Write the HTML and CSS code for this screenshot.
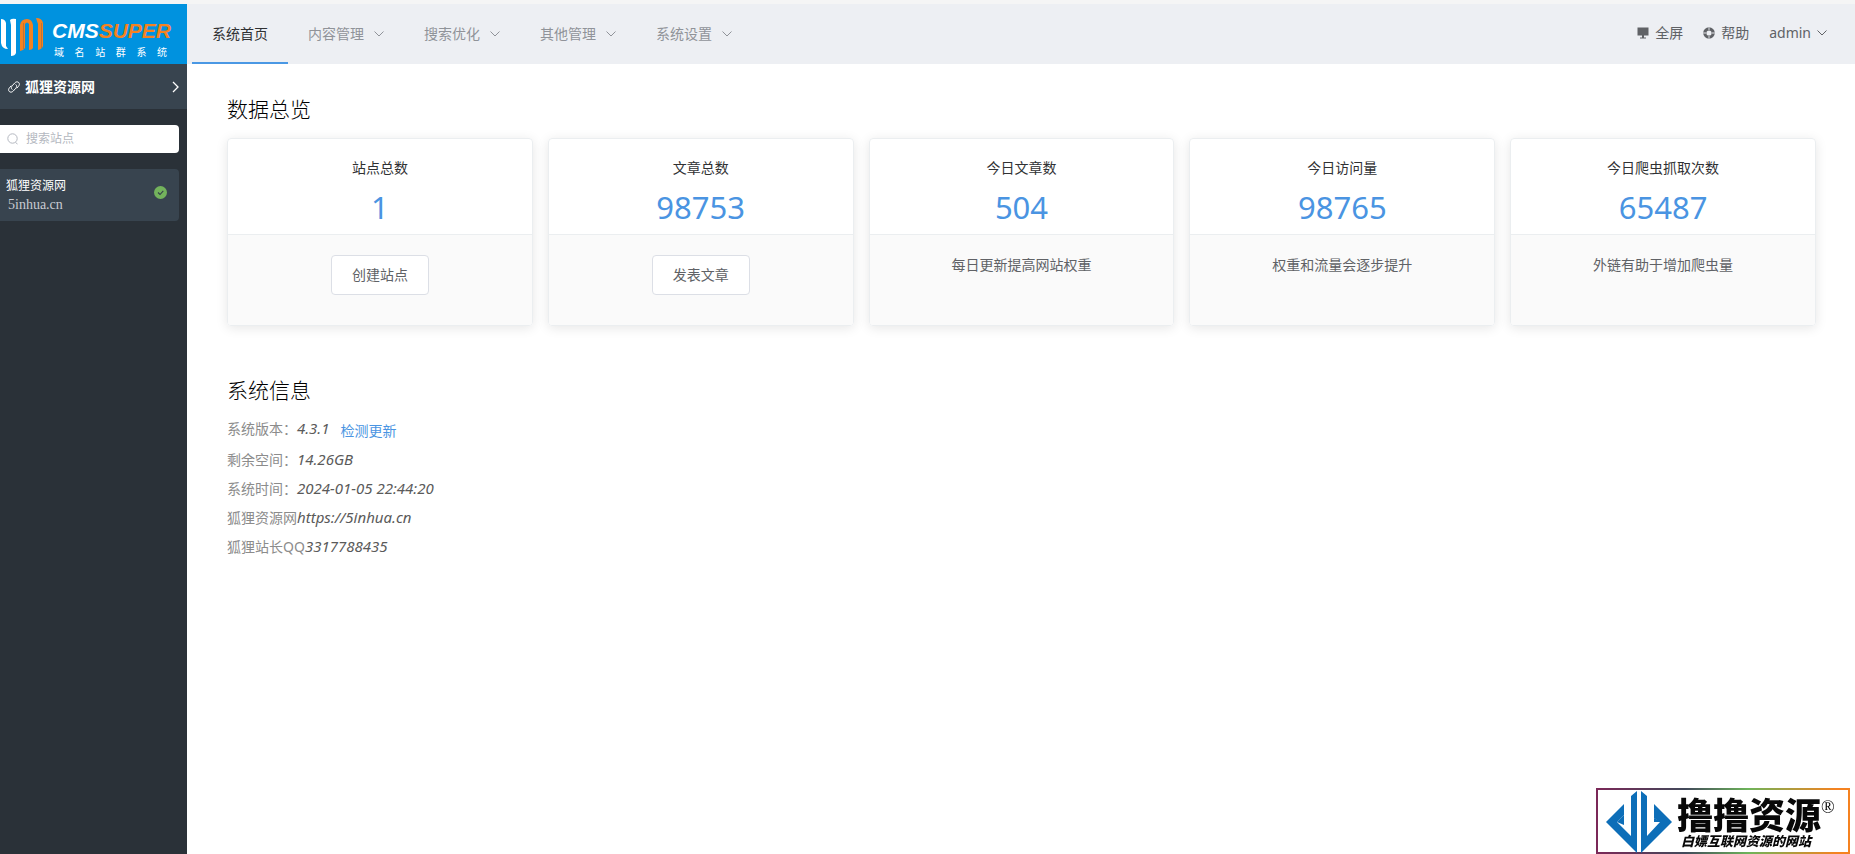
FILE: index.html
```html
<!DOCTYPE html>
<html lang="zh-CN">
<head>
<meta charset="utf-8">
<title>CMSSUPER</title>
<link rel="stylesheet" href="styles.css">
</head>
<body>
<div class="app">
  <aside class="sidebar">
    <div class="logo">
      <svg class="logo-mark" width="44" height="40" viewBox="0 0 44 40" aria-hidden="true">
        <path fill="#fff" d="M1 2q4 0 5 4v23l2 3q-6 0-7-6zM10 3q2-2 6-1v34q-1 3-5 3V8z"/>
        <path fill="#f58220" d="M20 8q1-6 7-6 5 0 6 6v23q-1 2-4 2V7q-2-3-4 0v24q-2 3-5 3zM36 1q6 0 7 5v23q-1 3-5 4V7z"/>
        <path fill="#b9743c" d="M23 6h1v26h-1zM41 6h1v25h-1z"/>
      </svg>
      <div class="logo-text">
        <div class="logo-name">CMS<span class="logo-accent">SUPER</span></div>
        <div class="logo-sub"><span>域</span><span>名</span><span>站</span><span>群</span><span>系</span><span>统</span></div>
      </div>
    </div>
    <button class="current-site" type="button">
      <svg width="12" height="12" viewBox="0 0 12 12" fill="none" stroke="#fff" stroke-linecap="round" aria-hidden="true"><path d="M4 8.300C2.800 7.300 3.200 5.900 4.200 4.800L6.700 2C8 .6 9.700.5 10.700 1.500s.9 2.500-.2 3.800L9 7M8 3.700c1.200 1 .8 2.400-.2 3.500L5.300 10C4 11.400 2.300 11.500 1.300 10.500s-.9-2.500.2-3.800L3 5"/></svg>
      <span class="current-name">狐狸资源网</span>
      <svg width="7" height="12" viewBox="0 0 7 12" fill="none" stroke="#fff" stroke-width="1.300" aria-hidden="true"><path d="M1 1l5 5-5 5"/></svg>
    </button>
    <label class="search">
      <svg width="12" height="12" viewBox="0 0 12 12" fill="none" stroke="#b4b8c0" aria-hidden="true"><circle cx="5.500" cy="5.500" r="4.700"/><path d="M8.500 9.500l2 1.500"/></svg>
      <input type="text" placeholder="搜索站点" aria-label="搜索站点">
    </label>
    <a class="site" href="#">
      <span class="site-info"><span class="site-name">狐狸资源网</span><span class="site-domain">5inhua.cn</span></span>
      <svg class="site-ok" width="13" height="13" viewBox="0 0 13 13" aria-hidden="true"><circle cx="6.500" cy="6.500" r="6.500" fill="#73b35c"/><path d="M4 6.500l2 2L9.300 4.900" fill="none" stroke="#33404a" stroke-width="1.100"/></svg>
    </a>
  </aside>

  <div class="page">
    <header class="topbar">
      <nav class="nav">
        <a class="nav-item active" href="#">系统首页</a>
        <a class="nav-item" href="#">内容管理<svg class="chevron" viewBox="0 0 10 6"><path d="M.5.500l4.500 4.500L9.500.500"/></svg></a>
        <a class="nav-item" href="#">搜索优化<svg class="chevron" viewBox="0 0 10 6"><path d="M.5.500l4.500 4.500L9.500.500"/></svg></a>
        <a class="nav-item" href="#">其他管理<svg class="chevron" viewBox="0 0 10 6"><path d="M.5.500l4.500 4.500L9.500.500"/></svg></a>
        <a class="nav-item" href="#">系统设置<svg class="chevron" viewBox="0 0 10 6"><path d="M.5.500l4.500 4.500L9.500.500"/></svg></a>
      </nav>
      <div class="tools">
        <button type="button"><svg width="12" height="12" viewBox="0 0 12 12" fill="#606266" aria-hidden="true"><path d="M.5.500h11v8H.5zM5 8.500h2v2H5zM3 10.500h6v1H3z"/></svg>全屏</button>
        <button type="button"><svg width="12" height="12" viewBox="0 0 12 12" fill="none" aria-hidden="true"><circle cx="6" cy="6" r="4.200" stroke="#606266" stroke-width="3.200"/><path d="M6 0v3M6 9v3M0 6h3M9 6h3" stroke="#b9bbbf" stroke-width="1.400"/></svg>帮助</button>
        <button type="button">admin<svg class="chevron" viewBox="0 0 10 6"><path d="M.5.500l4.500 4.500L9.500.500"/></svg></button>
      </div>
    </header>

    <main class="content">
      <h2>数据总览</h2>
      <section class="cards">
        <article class="card"><div class="card-head"><h3>站点总数</h3><strong>1</strong></div><div class="card-foot"><button type="button">创建站点</button></div></article>
        <article class="card"><div class="card-head"><h3>文章总数</h3><strong>98753</strong></div><div class="card-foot"><button type="button">发表文章</button></div></article>
        <article class="card"><div class="card-head"><h3>今日文章数</h3><strong>504</strong></div><div class="card-foot"><p>每日更新提高网站权重</p></div></article>
        <article class="card"><div class="card-head"><h3>今日访问量</h3><strong>98765</strong></div><div class="card-foot"><p>权重和流量会逐步提升</p></div></article>
        <article class="card"><div class="card-head"><h3>今日爬虫抓取次数</h3><strong>65487</strong></div><div class="card-foot"><p>外链有助于增加爬虫量</p></div></article>
      </section>

      <h2>系统信息</h2>
      <ul class="info">
        <li>系统版本：<em>4.3.1</em><a href="#">检测更新</a></li>
        <li>剩余空间：<em>14.26GB</em></li>
        <li>系统时间：<em>2024-01-05 22:44:20</em></li>
        <li>狐狸资源网<em>https://5inhua.cn</em></li>
        <li>狐狸站长QQ<em>3317788435</em></li>
      </ul>
    </main>
  </div>
</div>

<div class="badge">
  <svg width="66" height="62" viewBox="0 0 66 62" fill="#0d6eb8" aria-hidden="true">
    <path d="M31 0v62L0 31l18-18v11l-7 7 14 14V5zM35 0v62l31-31-18-18v14l6 4-13 14V5z"/>
    <path d="M18 24v10l-7-3zM48 27l8 4h-8z"/>
  </svg>
  <div class="badge-text">
    <div class="badge-name">撸撸资源</div>
    <div class="badge-sub">白嫖互联网资源的网站</div>
  </div>
  <span class="badge-mark">®</span>
</div>
</body>
</html>
```

FILE: styles.css
```css
* {
  box-sizing: border-box;
}

body {
  margin: 0;
  background: #fff;
  color: #303133;
  font: 14px/20px "Noto Sans", "Noto Sans CJK SC", sans-serif;
}

h2, h3, p, ul {
  margin: 0;
  padding: 0;
  font-weight: 400;
}

a {
  color: inherit;
  text-decoration: none;
}

button {
  font: inherit;
  color: #606266;
  cursor: pointer;
}

svg {
  flex: none;
}

.app {
  display: flex;
  min-height: 100vh;
  border-top: 4px solid #f5f5f5;
}

.sidebar {
  flex: none;
  width: 187px;
  background: #2a3138;
}

.logo {
  display: flex;
  height: 60px;
  padding-top: 13px;
  background: #0092df;
}

.logo-text {
  padding: 0 0 0 8px;
}

.logo-name {
  font: italic bold 21px/28px "Liberation Sans", sans-serif;
  color: #fff;
}

.logo-accent {
  color: #f58220;
}

.logo-sub {
  display: flex;
  justify-content: space-between;
  padding: 1px 4px 0 2px;
  font-size: 10px;
  line-height: 12px;
  color: #fff;
}

.current-site {
  display: flex;
  align-items: center;
  gap: 5px;
  width: 100%;
  height: 45px;
  padding: 0 8px;
  border: 0;
  background: #38444f;
  color: #fff;
  font-weight: 700;
}

.current-name {
  flex: 1;
  text-align: left;
}

.search {
  display: flex;
  align-items: center;
  gap: 7px;
  height: 28px;
  margin: 16px 8px 16px 0;
  padding-left: 7px;
  border-radius: 0 4px 4px 0;
  background: #fff;
}

.search input {
  flex: 1;
  min-width: 0;
  padding: 0;
  border: 0;
  outline: 0;
  background: none;
  font: inherit;
  font-size: 12px;
}

.search input::placeholder {
  color: #b4b8c0;
}

.site {
  display: flex;
  justify-content: space-between;
  margin-right: 8px;
  padding: 8px 12px 6px 6px;
  border-radius: 0 4px 4px 0;
  background: #38444f;
}

.site-info {
  display: grid;
}

.site-ok {
  margin-top: 9px;
}

.site-name {
  font-size: 12px;
  line-height: 18px;
  color: #fff;
}

.site-domain {
  padding-left: 2px;
  font: 14px/20px "Liberation Serif", serif;
  color: #c8cbd2;
}

.page {
  flex: 1;
  min-width: 0;
}

.topbar {
  display: flex;
  justify-content: space-between;
  height: 60px;
  background: #edeff3;
}

.nav {
  display: flex;
  padding-left: 5px;
}

.nav-item {
  display: flex;
  align-items: center;
  gap: 10px;
  padding: 2px 20px 0;
  border-bottom: 2px solid transparent;
  color: #909399;
}

.nav-item.active {
  border-color: #4a98e4;
  color: #303133;
}

.chevron {
  width: 10px;
  height: 6px;
  fill: none;
  stroke: currentColor;
}

.tools {
  display: flex;
  gap: 20px;
  padding: 0 28px 2px 0;
}

.tools button {
  display: flex;
  align-items: center;
  gap: 6px;
  padding: 0;
  border: 0;
  background: none;
}

.content {
  padding: 31px 39px 31px 40px;
}

.content h2 {
  font-size: 21px;
  line-height: 28px;
  font-weight: 300;
  color: #000;
}

.cards {
  display: grid;
  grid-template-columns: repeat(5, 1fr);
  gap: 15px;
  margin: 15px 0 50px;
}

.card {
  overflow: hidden;
  border: 1px solid #ebeef0;
  border-radius: 4px;
  box-shadow: 0 2px 12px rgba(0, 0, 0, 0.1);
  text-align: center;
}

.card-head {
  padding: 19px 0 7px;
  border-bottom: 1px solid #ebeef0;
}

.card-head h3 {
  font-size: 14px;
}

.card-head strong {
  display: block;
  margin-top: 9px;
  font-size: 31px;
  line-height: 40px;
  font-weight: 400;
  color: #4a94e2;
}

.card-foot {
  height: 90px;
  padding-top: 20px;
  background: #fafafa;
  color: #606266;
}

.card-foot button {
  height: 40px;
  padding: 0 20px;
  border: 1px solid #dcdfe6;
  border-radius: 4px;
  background: #fff;
}

.info {
  margin-top: 10px;
  list-style: none;
  line-height: 29px;
  color: #8c8c8c;
}

.info em {
  font-size: 15px;
  color: #5a5a5a;
}

.info a {
  display: inline-block;
  padding: 2px 0 0 11px;
  line-height: 29px;
  vertical-align: top;
  color: #4a94e2;
}

.badge {
  position: fixed;
  right: 5px;
  bottom: 0;
  display: flex;
  width: 254px;
  height: 66px;
  padding: 1px 8px 0;
  border: 2px solid;
  border-image: linear-gradient(90deg, #7b2858, #41495a 35%, #6db45a 60%, #f58220 95%) 1;
  background: #fff;
  color: #080808;
}

.badge-text {
  padding: 3px 0 0 5px;
}

.badge-name {
  font: 900 36px/38px "Noto Sans CJK SC", sans-serif;
}

.badge-sub {
  padding-left: 4px;
  font: italic 900 13px/18px "Noto Sans CJK SC", sans-serif;
}

.badge-mark {
  padding-top: 7px;
  font: 18px/18px "Liberation Serif", serif;
}
```
